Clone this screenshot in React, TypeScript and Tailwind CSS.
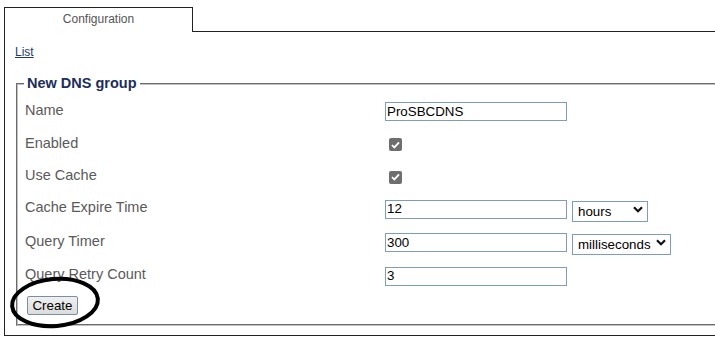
import React from "react";

type Row = {
  label: string;
  rowH: string;
  kind: "text" | "check";
  value?: string;
  unit?: string;
  unitW?: string;
};

const rows: Row[] = [
  { label: "Name", rowH: "h-[33px]", kind: "text", value: "ProSBCDNS" },
  { label: "Enabled", rowH: "h-[33px]", kind: "check" },
  { label: "Use Cache", rowH: "h-[32px]", kind: "check" },
  { label: "Cache Expire Time", rowH: "h-[32px]", kind: "text", value: "12", unit: "hours", unitW: "w-[76px]" },
  { label: "Query Timer", rowH: "h-[35px]", kind: "text", value: "300", unit: "milliseconds", unitW: "w-[99px]" },
  { label: "Query Retry Count", rowH: "h-[32px]", kind: "text", value: "3" },
];

const Chevron = () => (
  <svg width="10" height="7" viewBox="0 0 10 7" className="pointer-events-none absolute right-[5px] top-[7px]">
    <path d="M1 1.2 L5 5.2 L9 1.2" fill="none" stroke="#111" strokeWidth="2.2" />
  </svg>
);

const Check = () => (
  <span className="ml-[4px] flex h-[13px] w-[13px] items-center justify-center rounded-[2px] bg-[#6e6e6e]">
    <svg width="9" height="8" viewBox="0 0 9 8">
      <path d="M1 4.2 L3.4 6.4 L8 1.3" fill="none" stroke="#fff" strokeWidth="1.8" />
    </svg>
  </span>
);

const App = () => {
  return (
    <div className="relative h-[347px] w-[715px] overflow-hidden bg-white pl-[4px] pt-[7px] font-['Liberation_Sans',Arial,sans-serif]">
      <div className="w-[740px]">
        <div className="flex h-[25px]">
          <div className="w-[189px] border-l border-r border-t border-[#222] pt-[4px] text-center text-[12px] leading-[14px] text-[#555]">
            Configuration
          </div>
          <div className="flex-1 border-b border-[#222]"></div>
        </div>
        <div className="h-[304px] border-b border-l border-r border-[#222] pt-[13px]">
          <div className="pl-[10px] text-[12px] leading-[14px]">
            <a href="#" className="text-[#1f3a6e] underline">
              List
            </a>
          </div>
          <fieldset className="ml-[11px] mt-[16px] border-2 border-[#c0c0c0] pb-[7px] pt-[3px] [border-style:groove]">
            <legend className="ml-[6px] px-[3px] text-[14.5px] font-bold leading-[17px] text-[#1b2d5b]">New DNS group</legend>
            {rows.map((r) => (
              <div key={r.label} className={`flex items-center ${r.rowH}`}>
                <div className="w-[367px] pb-[3px] pl-[7px] text-[14.5px] leading-[17px] text-[#5a5a5a]">{r.label}</div>
                {r.kind === "check" ? (
                  <Check />
                ) : (
                  <>
                    <input
                      readOnly
                      value={r.value}
                      className="h-[19px] w-[182px] border border-[#7f9db9] pl-[1px] text-[13.33px] text-black outline-none"
                    />
                    {r.unit && (
                      <div className={`relative ml-[5px] h-[21px] ${r.unitW}`}>
                        <select
                          defaultValue={r.unit}
                          className="h-full w-full appearance-none border border-[#7f9db9] bg-white pl-[5px] text-[13.33px] text-black outline-none"
                        >
                          <option>{r.unit}</option>
                        </select>
                        <Chevron />
                      </div>
                    )}
                  </>
                )}
              </div>
            ))}
            <button className="ml-[9px] mt-[4px] h-[19px] w-[51px] rounded-[2px] border border-[#7a8ea8] bg-gradient-to-b from-[#f0f0f0] to-[#dcdcdc] text-[13.33px] leading-none text-black">
              Create
            </button>
          </fieldset>
        </div>
      </div>
      <svg width="715" height="347" className="pointer-events-none absolute left-0 top-0">
        <ellipse cx="55" cy="302.5" rx="43" ry="23.5" fill="none" stroke="#000" strokeWidth="4" transform="rotate(-5 55 302.5)" />
      </svg>
    </div>
  );
};

export default App;
